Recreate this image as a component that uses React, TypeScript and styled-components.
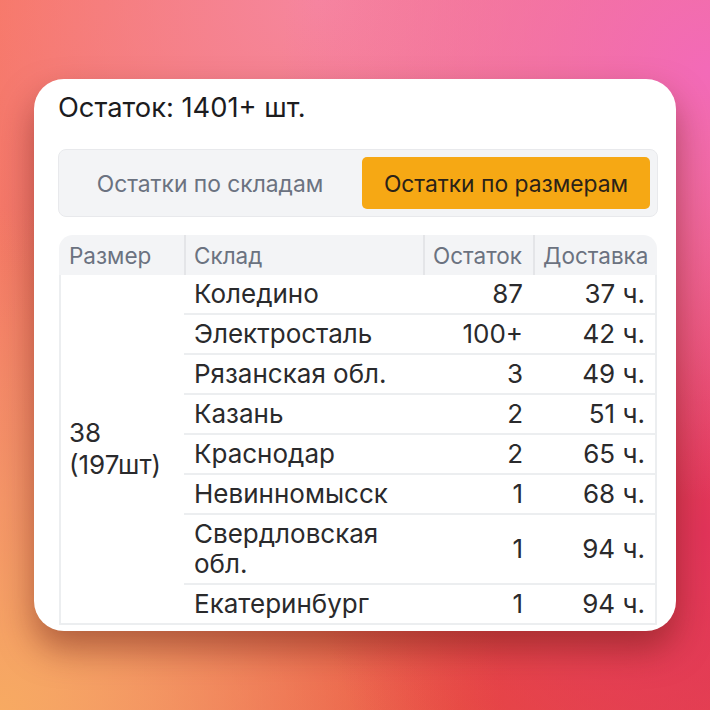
import styled, { createGlobalStyle } from "styled-components";

const GlobalStyle = createGlobalStyle`
  html, body {
    margin: 0;
    padding: 0;
  }
  body {
    font-family: Inter, "Noto Sans", sans-serif;
  }
`;

const Backdrop = styled.div`
  width: 710px;
  height: 710px;
  overflow: hidden;
  padding-top: 79px;
  box-sizing: border-box;
  background:
    radial-gradient(circle at 100% 10%, #f36ab8 0%, rgba(243, 106, 184, 0) 45%),
    radial-gradient(circle at 100% 75%, #e2345a 0%, rgba(226, 52, 90, 0) 45%),
    radial-gradient(circle at 0% 100%, #f7aa62 0%, rgba(247, 170, 98, 0) 50%),
    radial-gradient(circle at 65% 100%, #e84a3c 0%, rgba(232, 74, 60, 0) 50%),
    radial-gradient(circle at 45% 0%, #f6869e 0%, rgba(246, 134, 158, 0) 50%),
    linear-gradient(135deg, #f7765e 0%, #f07c78 50%, #e54a52 100%);
`;

const Card = styled.div`
  margin-left: 34px;
  width: 642px;
  height: 552px;
  box-sizing: border-box;
  padding: 12px 18px 0 24px;
  background: #fff;
  border-radius: 30px;
  overflow: hidden;
  box-shadow: 0 18px 34px rgba(110, 30, 20, 0.5);
`;

const Title = styled.div`
  font-size: 27.3px;
  line-height: 34px;
  color: #1c1c1e;
`;

const Tabs = styled.div`
  margin-top: 24px;
  display: grid;
  grid-template-columns: 1fr 1fr;
  padding: 7px;
  gap: 8px;
  background: #f3f4f6;
  border: 1px solid #e8e9ec;
  border-radius: 8px;
`;

const Tab = styled.div<{ $active?: boolean }>`
  height: 52px;
  display: flex;
  align-items: center;
  justify-content: center;
  font-size: 22.8px;
  border-radius: 5px;
  color: ${(p) => (p.$active ? "#2a2218" : "#6b7280")};
  background: ${(p) => (p.$active ? "#f6a814" : "transparent")};
`;

const Table = styled.table`
  margin-top: 18px;
  margin-left: 1px;
  width: 598px;
  border-collapse: separate;
  border-spacing: 0;
  font-size: 26px;
  color: #2a2a2c;
`;

const HeadCell = styled.th<{ $right?: boolean }>`
  height: 40px;
  padding: 0 8px 0 8px;
  background: #f3f4f6;
  color: #6b7280;
  font-weight: 400;
  font-size: 22.5px;
  text-align: ${(p) => (p.$right ? "right" : "left")};
  border-left: 2px solid #e4e5e8;
  white-space: nowrap;
  &:first-child {
    border-left: none;
    padding-left: 10px;
    border-top-left-radius: 14px;
  }
  &:last-child {
    border-top-right-radius: 14px;
  }
`;

const SizeCell = styled.td`
  vertical-align: middle;
  padding: 0 8px;
  border-left: 2px solid #eceef0;
  border-bottom: 2px solid #eceef0;
  line-height: 32px;
  font-size: 26px;
`;

const Cell = styled.td<{ $right?: boolean; $last?: boolean }>`
  padding: 4px 10px;
  line-height: 30px;
  text-align: ${(p) => (p.$right ? "right" : "left")};
  border-bottom: 2px solid #eceef0;
  border-right: ${(p) => (p.$last ? "2px solid #eceef0" : "none")};
  white-space: ${(p) => (p.$right ? "nowrap" : "normal")};
`;

const rows = [
  { store: "Коледино", qty: "87", eta: "37 ч." },
  { store: "Электросталь", qty: "100+", eta: "42 ч." },
  { store: "Рязанская обл.", qty: "3", eta: "49 ч." },
  { store: "Казань", qty: "2", eta: "51 ч." },
  { store: "Краснодар", qty: "2", eta: "65 ч." },
  { store: "Невинномысск", qty: "1", eta: "68 ч." },
  { store: "Свердловская обл.", qty: "1", eta: "94 ч." },
  { store: "Екатеринбург", qty: "1", eta: "94 ч." },
];

export default function App() {
  return (
    <>
      <GlobalStyle />
      <Backdrop>
        <Card>
          <Title>Остаток: 1401+ шт.</Title>
          <Tabs>
            <Tab>Остатки по складам</Tab>
            <Tab $active>Остатки по размерам</Tab>
          </Tabs>
          <Table>
            <colgroup>
              <col style={{ width: 125 }} />
              <col style={{ width: 239 }} />
              <col style={{ width: 110 }} />
              <col style={{ width: 124 }} />
            </colgroup>
            <thead>
              <tr>
                <HeadCell>Размер</HeadCell>
                <HeadCell>Склад</HeadCell>
                <HeadCell>Остаток</HeadCell>
                <HeadCell>Доставка</HeadCell>
              </tr>
            </thead>
            <tbody>
              {rows.map((r, i) => (
                <tr key={r.store}>
                  {i === 0 && (
                    <SizeCell rowSpan={rows.length}>
                      38
                      <br />
                      (197шт)
                    </SizeCell>
                  )}
                  <Cell>{r.store}</Cell>
                  <Cell $right>{r.qty}</Cell>
                  <Cell $right $last>
                    {r.eta}
                  </Cell>
                </tr>
              ))}
            </tbody>
          </Table>
        </Card>
      </Backdrop>
    </>
  );
}
